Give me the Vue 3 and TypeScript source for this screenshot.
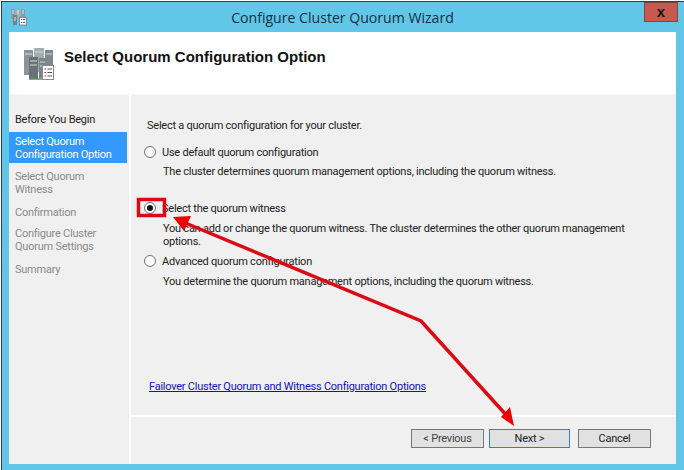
<template>
  <div class="window">
    <div class="titlebar">
      <svg class="app-icon" viewBox="0 0 18 18" width="18" height="18">
        <rect x="1" y="1" width="4" height="10" fill="#8d9aa0" />
        <rect x="6" y="1" width="4" height="10" fill="#a6b1b6" />
        <rect x="11" y="1" width="4" height="8" fill="#8d9aa0" />
        <rect x="3" y="7" width="4" height="10" fill="#75828a" />
        <path d="M2 3h2M2 5h2M7 3h2M7 5h2M12 3h2M12 5h2M4 10h2M4 12h2" stroke="#dfe6e8" stroke-width="1" />
        <rect x="9.5" y="9.5" width="7" height="7.5" fill="#fff" stroke="#777" stroke-width="0.8" />
        <path d="M11 11.5h1M11 14.5h1" stroke="#a33" stroke-width="1" />
        <path d="M12.8 11.5h2.5M12.8 14.5h2.5" stroke="#555" stroke-width="1" />
      </svg>
      <span class="title">Configure Cluster Quorum Wizard</span>
      <button class="close">x</button>
    </div>
    <div class="client">
      <div class="header">
        <svg class="header-icon" viewBox="0 0 34 34" width="34" height="34">
          <rect x="3" y="3" width="9" height="25" fill="#8b9599" />
          <rect x="13" y="1" width="10" height="24" fill="#a4adb1" />
          <rect x="24" y="3" width="8" height="20" fill="#7f898d" />
          <rect x="8" y="10" width="9" height="22" fill="#687377" />
          <rect x="18" y="11" width="7" height="20" fill="#79858a" />
          <path d="M4 7h7M14 5h8M25 7h6M9 14h7M19 15h5M9 18h7M19 19h5" stroke="#d5dbde" stroke-width="1" />
          <path d="M8 32h16" stroke="#5f8f57" stroke-width="1.5" />
          <rect x="21.5" y="18.5" width="11" height="14" fill="#fff" stroke="#8a8a8a" />
          <path d="M23.5 22h1.5M23.5 25.5h1.5M23.5 29h1.5" stroke="#9c2b2b" stroke-width="1.2" />
          <path d="M26.5 22h4.5M26.5 25.5h4.5M26.5 29h4.5" stroke="#555" stroke-width="1" />
        </svg>
        <h1>Select Quorum Configuration Option</h1>
      </div>
      <div class="main">
        <nav class="steps">
          <div
            v-for="step in steps"
            :key="step.label"
            class="step"
            :class="[step.state, { two: step.label.includes('<br>') }]"
            v-html="step.label"
          ></div>
        </nav>
        <div class="content">
          <div class="pane">
            <p class="intro">Select a quorum configuration for your cluster.</p>
            <div v-for="opt in options" :key="opt.label" class="option">
              <div class="opt-row">
                <span class="radio" :class="{ on: opt.checked }"></span>
                <span>{{ opt.label }}</span>
              </div>
              <p class="desc" :class="{ tight: opt.lines === 2 }">{{ opt.desc }}</p>
            </div>
            <a class="help">Failover Cluster Quorum and Witness Configuration Options</a>
          </div>
          <div class="footer">
            <button class="btn prev">&lt; Previous</button>
            <button class="btn next">Next &gt;</button>
            <button class="btn cancel">Cancel</button>
          </div>
        </div>
      </div>
    </div>

    <!-- красные пометки поверх окна -->
    <svg class="marks" viewBox="0 0 684 470" width="684" height="470">
      <rect x="138.5" y="199.5" width="26" height="16" fill="none" stroke="#dc0a14" stroke-width="3.5" />
      <path d="M183 222 L421 321 L508 417" fill="none" stroke="#dc0a14" stroke-width="3.5" />
      <path d="M173 217 L191 216 L184 231 Z" fill="#ee0000" />
      <path d="M514 426 L501 417 L510 407 Z" fill="#ee0000" />
    </svg>
  </div>
</template>

<script setup lang="ts">
interface Step {
  label: string;
  state: string;
}

interface Option {
  label: string;
  desc: string;
  checked: boolean;
  lines: number;
}

const steps: Step[] = [
  { label: 'Before You Begin', state: 'done' },
  { label: 'Select Quorum<br>Configuration Option', state: 'active' },
  { label: 'Select Quorum<br>Witness', state: '' },
  { label: 'Confirmation', state: '' },
  { label: 'Configure Cluster<br>Quorum Settings', state: '' },
  { label: 'Summary', state: '' }
];

const options: Option[] = [
  {
    label: 'Use default quorum configuration',
    desc: 'The cluster determines quorum management options, including the quorum witness.',
    checked: false,
    lines: 1
  },
  {
    label: 'Select the quorum witness',
    desc: 'You can add or change the quorum witness. The cluster determines the other quorum management options.',
    checked: true,
    lines: 2
  },
  {
    label: 'Advanced quorum configuration',
    desc: 'You determine the quorum management options, including the quorum witness.',
    checked: false,
    lines: 1
  }
];
</script>

<style>
html,
body {
  margin: 0;
  background: #fff;
  overflow: hidden;
}
</style>

<style scoped>
.window {
  position: relative;
  box-sizing: border-box;
  width: 683px;
  height: 469px;
  margin: 1px 0 0 1px;
  border-top: 1px solid #24404e;
  border-left: 1px solid #24404e;
  background: #62c6e8;
  padding: 0 8px 6px 7px;
  display: flex;
  flex-direction: column;
  font-family: Roboto, "Open Sans", sans-serif;
  font-size: 11px;
  letter-spacing: -0.24px;
  color: #222;
}

.titlebar {
  height: 30px;
  flex: none;
  display: flex;
  align-items: center;
  justify-content: center;
  position: relative;
}

.app-icon {
  position: absolute;
  left: 1px;
  top: 6px;
}

.title {
  font-family: "Open Sans", sans-serif;
  font-size: 14.1px;
  letter-spacing: 0;
  color: #12303f;
  margin: 1px 0 0 0;
}

.close {
  position: absolute;
  right: -2px;
  top: 0;
  width: 34px;
  height: 20px;
  padding: 0 0 4px;
  border: 1px solid #7a4a45;
  background: #c75a4e;
  color: #111;
  font: bold 15px "Liberation Sans", sans-serif;
}

.client {
  flex: 1;
  min-height: 0;
  display: flex;
  flex-direction: column;
  background: #fff;
}

.header {
  height: 63px;
  flex: none;
  display: flex;
  align-items: flex-start;
  box-sizing: border-box;
  padding: 15px 0 0 12px;
  border-bottom: 1px solid #f5f5f5;
}

.header-icon {
  margin-right: 9px;
}

h1 {
  margin: 1px 0 0;
  font: bold 15px "Liberation Sans", sans-serif;
  letter-spacing: 0;
  color: #111;
}

.main {
  flex: 1;
  min-height: 0;
  display: flex;
  background: #fff;
}

.steps {
  width: 120px;
  flex: none;
  margin-right: 2px;
  background: #f0f0f0;
  padding-top: 16px;
  box-sizing: border-box;
  color: #8a8a8a;
  line-height: 13px;
}

.step {
  padding: 2px 0 2px 6px;
  margin-bottom: 4px;
}

.step.two {
  margin-bottom: 6px;
}

.step.done {
  color: #222;
  margin-bottom: 4px;
}

.step.active {
  background: #3399ff;
  color: #fff;
  padding: 3px 0 2px 6px;
  margin-right: 2px;
  margin-bottom: 5px;
}

.content {
  flex: 1;
  min-width: 0;
  display: flex;
  flex-direction: column;
  background: #f0f0f0;
}

.pane {
  flex: 1;
  padding: 24px 0 0 16px;
  border-bottom: 2px solid #fff;
  display: flex;
  flex-direction: column;
}

.intro {
  margin: 0 0 12px;
  line-height: 14px;
}

.opt-row {
  display: flex;
  align-items: center;
  height: 14px;
  margin-left: -3px;
  gap: 6px;
}

.radio {
  width: 12px;
  height: 12px;
  box-sizing: border-box;
  border: 1px solid #6e6e6e;
  border-radius: 50%;
  background: #fff;
  position: relative;
  flex: none;
}

.radio.on::after {
  content: "";
  position: absolute;
  left: 2px;
  top: 2px;
  width: 6px;
  height: 6px;
  border-radius: 50%;
  background: #111;
}

.desc {
  margin: 7px 0 22px 16px;
  width: 480px;
  line-height: 13px;
}

.option:first-of-type .desc {
  margin-top: 6px;
  margin-bottom: 23px;
}

.desc.tight {
  margin-bottom: 6px;
}

.help {
  margin-top: auto;
  margin-bottom: 22px;
  margin-left: 2px;
  color: #1010c0;
  text-decoration: underline;
}

.footer {
  height: 47px;
  flex: none;
  display: flex;
  align-items: flex-start;
  box-sizing: border-box;
  padding: 12px 0 0 280px;
}

.btn {
  height: 19px;
  box-sizing: border-box;
  padding: 0;
  border: 1px solid #777;
  background: #e1e1e1;
  color: #222;
  font: inherit;
  letter-spacing: inherit;
}

.prev {
  width: 73px;
  margin-right: 5px;
  color: #444;
}

.next {
  width: 81px;
  margin-right: 8px;
  border-color: #3c7fb1;
}

.cancel {
  width: 73px;
}

.marks {
  position: absolute;
  left: -2px;
  top: -2px;
  pointer-events: none;
}
</style>
